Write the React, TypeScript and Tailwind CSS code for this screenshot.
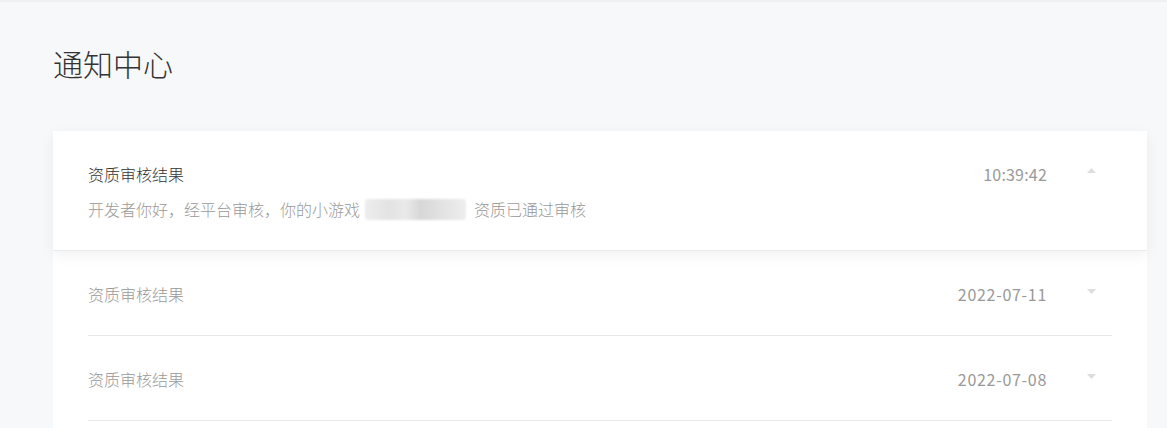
const font = "font-['Microsoft_YaHei','Noto_Sans_CJK_SC',sans-serif]";

type Notice = { title: string; time: string; open?: boolean };

const notices: Notice[] = [
  { title: '资质审核结果', time: '10:39:42', open: true },
  { title: '资质审核结果', time: '2022-07-11' },
  { title: '资质审核结果', time: '2022-07-08' },
];

function Caret({ up }: { up?: boolean }) {
  return (
    <svg width="9" height="5" viewBox="0 0 9 5" className="block">
      {up ? <path d="M0 5 L4.5 0 L9 5 Z" fill="#dcdde0" /> : <path d="M0 0 L4.5 5 L9 0 Z" fill="#dcdde0" />}
    </svg>
  );
}

function Blurred() {
  return (
    <span className="inline-block align-middle ml-[5px] mr-[8px] h-[21px] w-[101px] rounded-[3px] bg-[linear-gradient(90deg,#ededed_0%,#e3e3e3_25%,#eaeaea_40%,#d7d7d7_55%,#e2e2e2_75%,#eeeeee_100%)] blur-[1px]" />
  );
}

export default function App() {
  return (
    <div className={`${font} h-[428px] overflow-hidden bg-[#f7f8fa] border-t-2 border-[#f0f1f3]`}>
      <div className="pl-[53px] pr-[20px]">
        <h1 className="pt-[42px] text-[30px] leading-[38px] text-[#333] font-light">通知中心</h1>

        <div className="mt-[49px]">
          {/* expanded item */}
          <div className="relative z-10 bg-white px-[35px] pt-[31px] pb-[29px] border-b border-[#e9eaec] shadow-[0_4px_14px_rgba(0,0,0,0.06)]">
            <div className="flex items-center">
              <div className="flex-1 text-[16px] leading-[24px] text-[#333] font-light">{notices[0].title}</div>
              <div className="text-[16px] leading-[24px] text-[#999] tracking-[0.2px]">{notices[0].time}</div>
              <div className="w-[65px] flex justify-end pr-[16px] -mt-[8px]">
                <Caret up />
              </div>
            </div>
            <div className="mt-[11px] text-[16px] leading-[24px] text-[#999] flex items-center font-light">
              <span>开发者你好，经平台审核，你的小游戏</span>
              <Blurred />
              <span>资质已通过审核</span>
            </div>
          </div>

          {/* collapsed items */}
          <div className="bg-white px-[35px] pb-[7px]">
            {notices.slice(1).map((n) => (
              <div key={n.time} className="flex items-center pt-[31px] pb-[29px] border-b border-[#e6e7e9]">
                <div className="flex-1 text-[16px] leading-[24px] text-[#999] font-light">{n.title}</div>
                <div className="text-[16px] leading-[24px] text-[#999] tracking-[0.7px]">{n.time}</div>
                <div className="w-[65px] flex justify-end pr-[16px] -mt-[6px]">
                  <Caret />
                </div>
              </div>
            ))}
          </div>
        </div>
      </div>
    </div>
  );
}
